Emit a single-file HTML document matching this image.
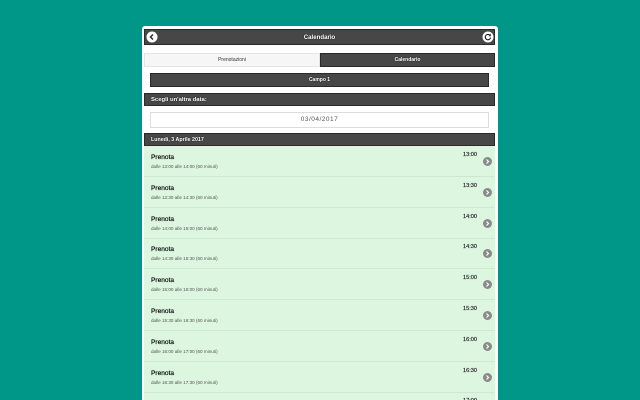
<!DOCTYPE html>
<html><head><meta charset="utf-8"><style>
html,body{margin:0;padding:0;width:640px;height:400px;overflow:hidden;background:#009688;font-family:"Liberation Sans",sans-serif}
#p{position:relative;width:640px;height:400px;overflow:hidden;background:#009688}
.a{position:absolute;box-sizing:border-box}
.bar{background:#474747;color:#fff;font-weight:bold;border:1px solid #2a2a2a;text-shadow:0 0 1px #000}
.c{text-align:center}
.row{position:absolute;left:144px;width:351px;height:31px;border-bottom:1px solid #cfe6d3;box-sizing:border-box}
.row b{position:absolute;left:7px;top:7px;font-size:6.6px;line-height:9px;color:#111;font-weight:normal;-webkit-text-stroke:.2px #111}
.row i{position:absolute;left:7px;top:17px;font-size:4.6px;line-height:7px;color:#555;font-style:normal;white-space:nowrap}
.row u{position:absolute;left:319px;top:6px;font-size:5.6px;line-height:7px;color:#222;text-decoration:none;-webkit-text-stroke:.15px #222}
.row svg{position:absolute;left:339px;top:11px}
</style></head><body><div id="p">
<div class="a" style="left:142px;top:26px;width:356px;height:374px;background:#fff;border-radius:3px 3px 0 0"></div>
<div class="a" style="left:144px;top:146px;width:351px;height:254px;background:#dcf6df"></div>

<div class="a bar c" style="left:144px;top:29px;width:351px;height:16px;font-size:6.1px;line-height:15px">Calendario</div>
<svg class="a" style="left:146px;top:31px" width="12" height="12" viewBox="0 0 12 12"><circle cx="6" cy="6" r="5.5" fill="#fff"/><path d="M7 3.5 4.5 6 7 8.5" fill="none" stroke="#222" stroke-width="1.4"/></svg>
<svg class="a" style="left:482px;top:31px" width="12" height="12" viewBox="0 0 12 12"><circle cx="6" cy="6" r="5.5" fill="#fff"/><path d="M8.2 4.6A2.7 2.7 0 1 0 8.6 6.6" fill="none" stroke="#222" stroke-width="1.1"/><path d="M8.8 2.8V5.2H6.6Z" fill="#222"/></svg>

<div class="a c" style="left:144px;top:53px;width:176px;height:14px;background:#f6f6f6;border:1px solid #e4e4e4;font-size:5px;line-height:13px;color:#333">Prenotazioni</div>
<div class="a bar c" style="left:320px;top:53px;width:175px;height:14px;font-size:5px;line-height:13px">Calendario</div>
<div class="a bar c" style="left:150px;top:73px;width:339px;height:14px;font-size:5px;line-height:13px">Campo 1</div>
<div class="a bar" style="left:144px;top:93px;width:351px;height:13px;font-size:5.9px;line-height:12px;padding-left:6px">Scegli un'altra data:</div>
<div class="a c" style="left:150px;top:112px;width:339px;height:16px;background:#fff;border:1px solid #ddd;font-size:6.5px;line-height:14px;color:#555;letter-spacing:.5px">03/04/2017</div>
<div class="a bar" style="left:144px;top:133px;width:351px;height:13px;font-size:5.3px;line-height:12px;padding-left:6px">Lunedì, 3 Aprile 2017</div>

<div class="row" style="top:146px"><b>Prenota</b><i>dalle 13:00 alle 14:00 (60 minuti)</i><u>13:00</u><svg width="9" height="9" viewBox="0 0 9 9"><circle cx="4.5" cy="4.5" r="4.5" fill="#8a8a8a"/><path d="M3.5 2.5 5.5 4.5 3.5 6.5" fill="none" stroke="#fff" stroke-width="1.2"/></svg></div>
<div class="row" style="top:177px"><b>Prenota</b><i>dalle 12:30 alle 14:30 (60 minuti)</i><u>13:30</u><svg width="9" height="9" viewBox="0 0 9 9"><circle cx="4.5" cy="4.5" r="4.5" fill="#8a8a8a"/><path d="M3.5 2.5 5.5 4.5 3.5 6.5" fill="none" stroke="#fff" stroke-width="1.2"/></svg></div>
<div class="row" style="top:208px"><b>Prenota</b><i>dalle 14:00 alle 15:00 (60 minuti)</i><u>14:00</u><svg width="9" height="9" viewBox="0 0 9 9"><circle cx="4.5" cy="4.5" r="4.5" fill="#8a8a8a"/><path d="M3.5 2.5 5.5 4.5 3.5 6.5" fill="none" stroke="#fff" stroke-width="1.2"/></svg></div>
<div class="row" style="top:238px"><b>Prenota</b><i>dalle 14:30 alle 15:30 (60 minuti)</i><u>14:30</u><svg width="9" height="9" viewBox="0 0 9 9"><circle cx="4.5" cy="4.5" r="4.5" fill="#8a8a8a"/><path d="M3.5 2.5 5.5 4.5 3.5 6.5" fill="none" stroke="#fff" stroke-width="1.2"/></svg></div>
<div class="row" style="top:269px"><b>Prenota</b><i>dalle 15:00 alle 16:00 (60 minuti)</i><u>15:00</u><svg width="9" height="9" viewBox="0 0 9 9"><circle cx="4.5" cy="4.5" r="4.5" fill="#8a8a8a"/><path d="M3.5 2.5 5.5 4.5 3.5 6.5" fill="none" stroke="#fff" stroke-width="1.2"/></svg></div>
<div class="row" style="top:300px"><b>Prenota</b><i>dalle 15:30 alle 16:30 (60 minuti)</i><u>15:30</u><svg width="9" height="9" viewBox="0 0 9 9"><circle cx="4.5" cy="4.5" r="4.5" fill="#8a8a8a"/><path d="M3.5 2.5 5.5 4.5 3.5 6.5" fill="none" stroke="#fff" stroke-width="1.2"/></svg></div>
<div class="row" style="top:331px"><b>Prenota</b><i>dalle 16:00 alle 17:00 (60 minuti)</i><u>16:00</u><svg width="9" height="9" viewBox="0 0 9 9"><circle cx="4.5" cy="4.5" r="4.5" fill="#8a8a8a"/><path d="M3.5 2.5 5.5 4.5 3.5 6.5" fill="none" stroke="#fff" stroke-width="1.2"/></svg></div>
<div class="row" style="top:362px"><b>Prenota</b><i>dalle 16:30 alle 17:30 (60 minuti)</i><u>16:30</u><svg width="9" height="9" viewBox="0 0 9 9"><circle cx="4.5" cy="4.5" r="4.5" fill="#8a8a8a"/><path d="M3.5 2.5 5.5 4.5 3.5 6.5" fill="none" stroke="#fff" stroke-width="1.2"/></svg></div>
<div class="row" style="top:392px;height:8px;border:0;overflow:hidden"><u>17:00</u></div>
</div></body></html>
